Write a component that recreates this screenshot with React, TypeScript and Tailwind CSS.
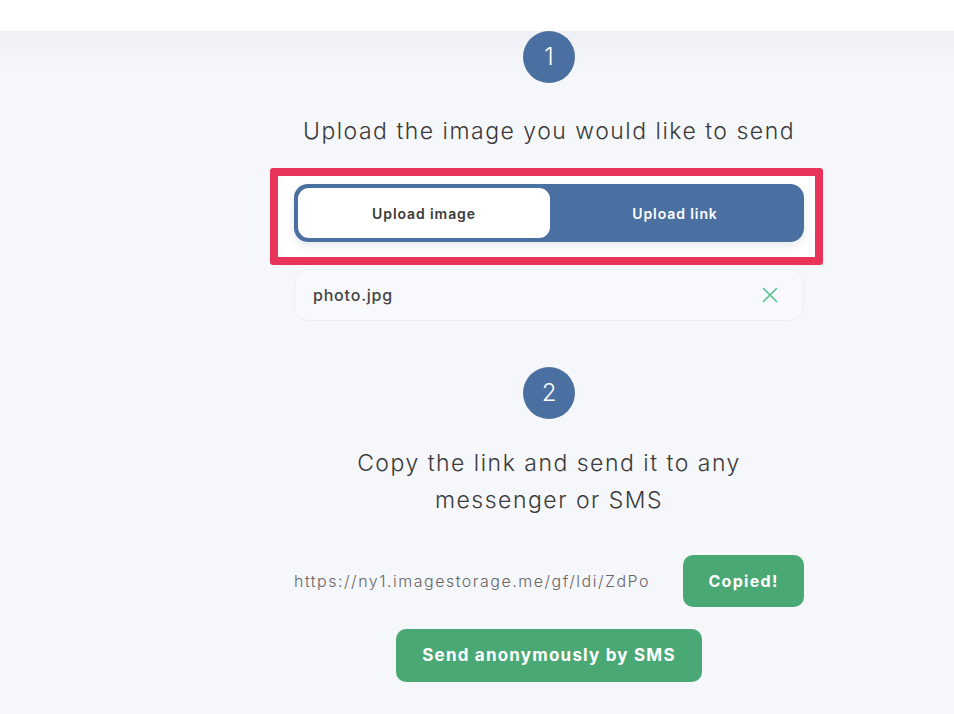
import { X } from "lucide-react";

function StepBadge({ n }: { n: number }) {
  return (
    <div className="mx-auto flex h-[52px] w-[52px] items-center justify-center rounded-full bg-[#4a6fa1] text-[24px] font-light text-white">
      {n}
    </div>
  );
}

export default function App() {
  return (
    <div
      className="relative min-h-[714px] w-[954px] overflow-hidden bg-[#f6f7fb] text-[#3b3b3b]"
      style={{ fontFamily: "Inter, 'Noto Sans', sans-serif" }}
    >
      {/* top bar */}
      <div className="h-[31px] bg-white shadow-[0_2px_10px_rgba(0,0,0,0.05)]" />
      <div className="h-[40px] -mb-[40px] bg-gradient-to-b from-[#eef0f5] to-[#f6f7fb]" />

      <div className="relative ml-[294px] w-[510px]">
        <div className="-mt-[29px]">
          <StepBadge n={1} />
        </div>

        <h2 className="mt-[33px] whitespace-nowrap text-center text-[23px] font-light leading-[30px] tracking-[1.5px] text-[#3a3a3a]">
          Upload the image you would like to send
        </h2>

        {/* highlighted toggle */}
        <div className="-ml-[24px] mt-[22px] w-[553px] rounded-[3px] border-[8px] border-[#e8335a] bg-white pb-[15px] pl-[16px] pr-[11px] pt-[8px]">
          <div className="flex h-[58px] rounded-[14px] bg-[#4a6fa1] p-[4px] shadow-[0_4px_8px_rgba(40,60,100,0.12)]">
            <button className="flex w-[252px] items-center justify-center rounded-[11px] bg-white text-[14px] font-semibold tracking-[0.9px] text-[#3a3a3a]">
              Upload image
            </button>
            <button className="flex flex-1 items-center justify-center text-[14px] font-semibold tracking-[0.9px] text-white">
              Upload link
            </button>
          </div>
        </div>

        {/* file field */}
        <div className="mt-[4px] flex h-[52px] items-center justify-between rounded-[14px] border border-[#eceef3] bg-[#f8f9fc] pl-[18px] pr-[20px]">
          <span className="text-[16px] font-medium tracking-[0.8px] text-[#444]">photo.jpg</span>
          <X className="h-[26px] w-[26px] text-[#5cc28f]" strokeWidth={1.5} />
        </div>

        <div className="mt-[46px]">
          <StepBadge n={2} />
        </div>

        <h2 className="mt-[26px] whitespace-nowrap text-center text-[23px] font-light leading-[37px] tracking-[1.5px] text-[#3a3a3a]">
          Copy the link and send it to any
          <br />
          messenger or SMS
        </h2>

        <div className="mt-[36px] flex items-center justify-between">
          <span className="whitespace-nowrap text-[16px] font-light tracking-[1.5px] text-[#666]">
            https://ny1.imagestorage.me/gf/ldi/ZdPo
          </span>
          <button className="h-[52px] w-[121px] rounded-[10px] bg-[#4aa874] text-[16px] font-bold tracking-[1.3px] text-white">
            Copied!
          </button>
        </div>

        <div className="mt-[22px] flex justify-center">
          <button className="h-[53px] w-[306px] whitespace-nowrap rounded-[10px] bg-[#4aa874] text-[17px] font-bold tracking-[1.2px] text-white">
            Send anonymously by SMS
          </button>
        </div>
      </div>
    </div>
  );
}
